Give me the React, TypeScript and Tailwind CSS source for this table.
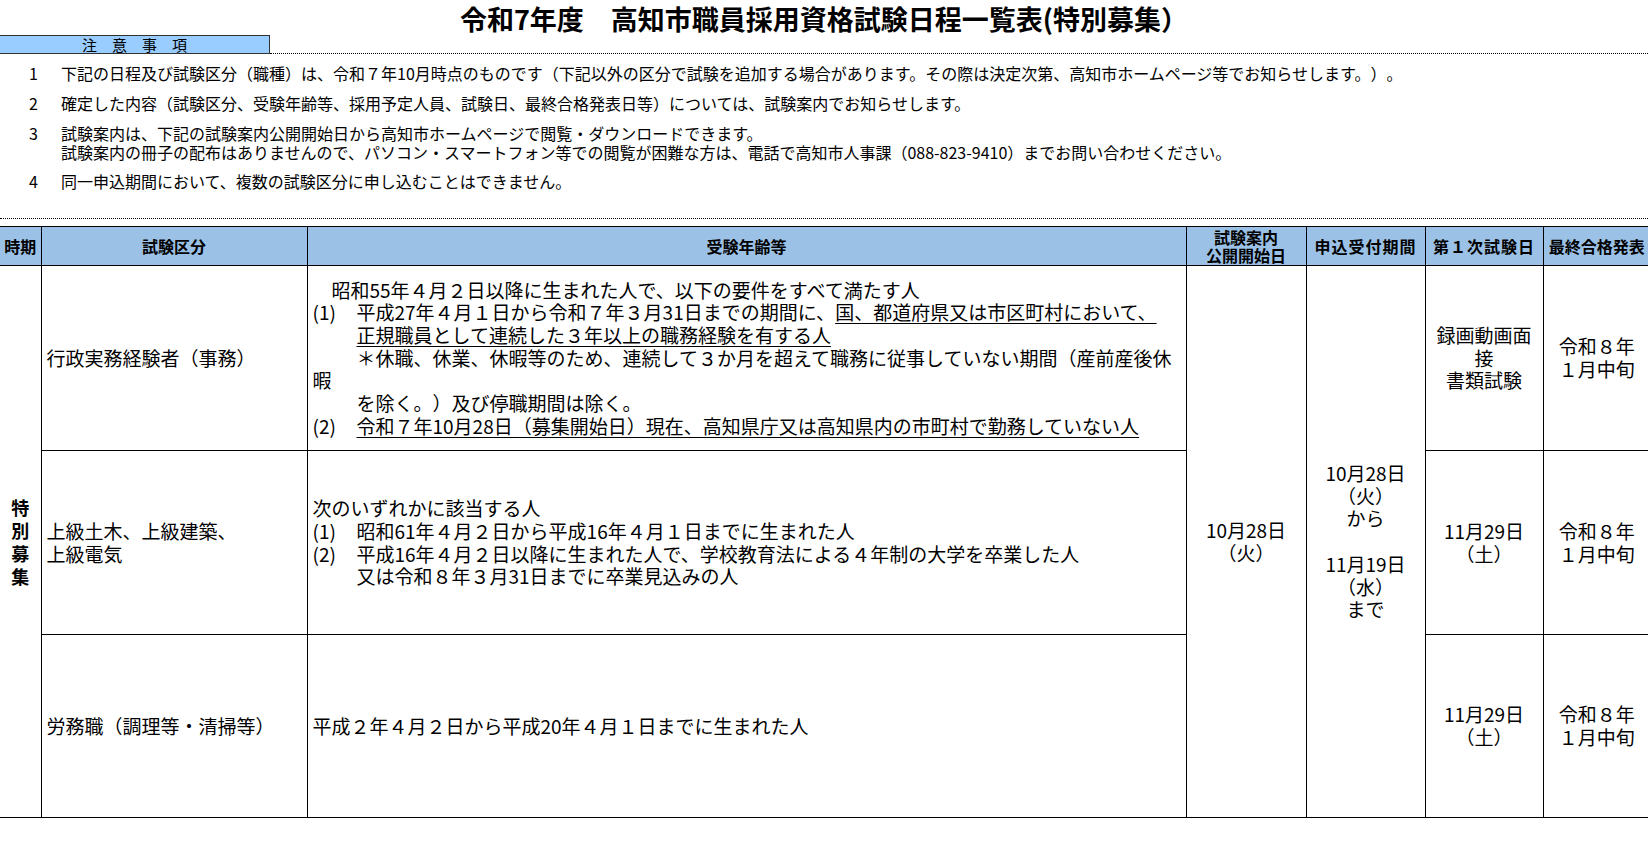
const notes = [
  {
    n: "1",
    mt: "mt-[10px]",
    lines: [
      "下記の日程及び試験区分（職種）は、令和７年10月時点のものです（下記以外の区分で試験を追加する場合があります。その際は決定次第、高知市ホームページ等でお知らせします。）。",
    ],
  },
  {
    n: "2",
    mt: "mt-[11px]",
    lines: ["確定した内容（試験区分、受験年齢等、採用予定人員、試験日、最終合格発表日等）については、試験案内でお知らせします。"],
  },
  {
    n: "3",
    mt: "mt-[11px]",
    lines: [
      "試験案内は、下記の試験案内公開開始日から高知市ホームページで閲覧・ダウンロードできます。",
      "試験案内の冊子の配布はありませんので、パソコン・スマートフォン等での閲覧が困難な方は、電話で高知市人事課（088-823-9410）までお問い合わせください。",
    ],
  },
  {
    n: "4",
    mt: "mt-[10px]",
    lines: ["同一申込期間において、複数の試験区分に申し込むことはできません。"],
  },
];

function Item({ label, children }: { label?: string; children?: React.ReactNode }) {
  return (
    <div className="flex whitespace-nowrap">
      <span className="w-[44px] shrink-0">{label}</span>
      <span>{children}</span>
    </div>
  );
}

function Centered({ lines }: { lines: string[] }) {
  return (
    <div className="text-center whitespace-nowrap">
      {lines.map((l, i) => (
        <div key={i} className="h-[22.7px]">
          {l}
        </div>
      ))}
    </div>
  );
}

const th = "border border-black font-bold text-[16px] leading-[18px] text-center";
const td = "border border-black align-middle";
const ul = "underline decoration-1 underline-offset-[3px]";

export default function App() {
  return (
    <div className="w-[1648px] h-[862px] overflow-hidden bg-white text-black [text-spacing-trim:space-all] font-['Noto_Sans_CJK_JP','Noto_Sans_CJK_SC',sans-serif]">
      <h1 className="h-[35px] pt-[2px] text-center text-[27px] font-bold leading-[34px] whitespace-nowrap">
        令和7年度　高知市職員採用資格試験日程一覧表(特別募集）
      </h1>

      <div className="flex h-[19px]">
        <div className="w-[270px] border border-l-0 border-[#333] bg-[#99ccff] text-center text-[15px] leading-[17px]">
          注　意　事　項
        </div>
        <div className="flex-1 border-b border-dotted border-black" />
      </div>

      <div className="text-[16px] leading-[19px]">
        {notes.map((note) => (
          <div key={note.n} className={`flex pl-[29px] ${note.mt}`}>
            <span className="w-[32px] shrink-0">{note.n}</span>
            <div className="whitespace-nowrap">
              {note.lines.map((l, i) => (
                <div key={i}>{l}</div>
              ))}
            </div>
          </div>
        ))}
      </div>

      <div className="mt-[27px] border-b border-dotted border-black" />

      <table className="mt-[7px] w-[1650px] table-fixed border-collapse">
        <colgroup>
          <col className="w-[41px]" />
          <col className="w-[266px]" />
          <col className="w-[879px]" />
          <col className="w-[120px]" />
          <col className="w-[119px]" />
          <col className="w-[118px]" />
          <col className="w-[107px]" />
        </colgroup>
        <thead>
          <tr className="h-[39px] bg-[#9bc2e6]">
            <th className={`${th} border-l-0`}>時期</th>
            <th className={th}>試験区分</th>
            <th className={th}>受験年齢等</th>
            <th className={th}>
              試験案内
              <br />
              公開開始日
            </th>
            <th className={`${th} tracking-[1px]`}>申込受付期間</th>
            <th className={`${th} tracking-[1px]`}>第１次試験日</th>
            <th className={`${th} border-r-0`}>最終合格発表</th>
          </tr>
        </thead>
        <tbody className="text-[19px] leading-[22.7px]">
          <tr className="h-[185px]">
            <td rowSpan={3} className={`${td} border-l-0 text-center font-bold text-[18px] leading-[23px]`}>
              特<br />別<br />募<br />集
            </td>
            <td className={`${td} pl-[5px] whitespace-nowrap`}>行政実務経験者（事務）</td>
            <td className={`${td} pl-[5px]`}>
              <div className="whitespace-nowrap">　昭和55年４月２日以降に生まれた人で、以下の要件をすべて満たす人</div>
              <Item label="(1)">
                平成27年４月１日から令和７年３月31日までの期間に、
                <span className={ul}>国、都道府県又は市区町村において、</span>
              </Item>
              <Item>
                <span className={ul}>正規職員として連続した３年以上の職務経験を有する人</span>
              </Item>
              <Item>＊休職、休業、休暇等のため、連続して３か月を超えて職務に従事していない期間（産前産後休</Item>
              <div>暇</div>
              <Item>を除く。）及び停職期間は除く。</Item>
              <Item label="(2)">
                <span className={ul}>令和７年10月28日（募集開始日）現在、高知県庁又は高知県内の市町村で勤務していない人</span>
              </Item>
            </td>
            <td rowSpan={3} className={td}>
              <Centered lines={["10月28日", "（火）"]} />
            </td>
            <td rowSpan={3} className={td}>
              <Centered lines={["10月28日", "（火）", "から", "", "11月19日", "（水）", "まで"]} />
            </td>
            <td className={td}>
              <Centered lines={["録画動画面", "接", "書類試験"]} />
            </td>
            <td className={`${td} border-r-0`}>
              <Centered lines={["令和８年", "１月中旬"]} />
            </td>
          </tr>
          <tr className="h-[184px]">
            <td className={`${td} pl-[5px] whitespace-nowrap`}>
              上級土木、上級建築、
              <br />
              上級電気
            </td>
            <td className={`${td} pl-[5px]`}>
              <div className="whitespace-nowrap">次のいずれかに該当する人</div>
              <Item label="(1)">昭和61年４月２日から平成16年４月１日までに生まれた人</Item>
              <Item label="(2)">平成16年４月２日以降に生まれた人で、学校教育法による４年制の大学を卒業した人</Item>
              <Item>又は令和８年３月31日までに卒業見込みの人</Item>
            </td>
            <td className={td}>
              <Centered lines={["11月29日", "（土）"]} />
            </td>
            <td className={`${td} border-r-0`}>
              <Centered lines={["令和８年", "１月中旬"]} />
            </td>
          </tr>
          <tr className="h-[183px]">
            <td className={`${td} pl-[5px] whitespace-nowrap`}>労務職（調理等・清掃等）</td>
            <td className={`${td} pl-[5px] whitespace-nowrap`}>平成２年４月２日から平成20年４月１日までに生まれた人</td>
            <td className={td}>
              <Centered lines={["11月29日", "（土）"]} />
            </td>
            <td className={`${td} border-r-0`}>
              <Centered lines={["令和８年", "１月中旬"]} />
            </td>
          </tr>
        </tbody>
      </table>
    </div>
  );
}
